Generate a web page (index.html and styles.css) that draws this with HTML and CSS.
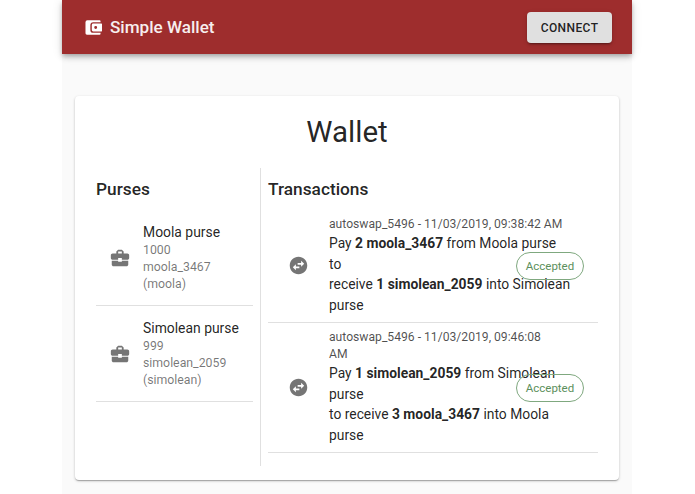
FILE: index.html
```html
<!DOCTYPE html>
<html lang="en">
<head>
<meta charset="utf-8">
<title>Simple Wallet</title>
<link rel="stylesheet" href="styles.css">
</head>
<body>
<div class="app">
  <header class="bar">
    <div class="brand">
      <svg class="brand-icon" viewBox="0.5 0.500 17.500 15" width="17" height="15"><path fill="#fff" fill-rule="evenodd" d="M3 0.500h12.500a1 1 0 0 1 1 1v1h-7.500a3 3 0 0 0-3 3v5a3 3 0 0 0 3 3h7.500v1a1 1 0 0 1-1 1h-13a1.500 1.500 0 0 1-1.500-1.500v-11.500a2 2 0 0 1 2-2z M9 4h8.500a.5.5 0 0 1 .5.5v7a.5.500 0 0 1-.5.5h-8.500a1.500 1.500 0 0 1-1.500-1.500v-5a1.500 1.500 0 0 1 1.500-1.500z M11.500 6.500a1.500 1.500 0 1 0 0 3a1.500 1.500 0 0 0 0-3z"/></svg>
      <span class="brand-name">Simple Wallet</span>
    </div>
    <button class="connect">CONNECT</button>
  </header>
  <main class="main">
    <section class="card">
      <h1 class="title">Wallet</h1>
      <div class="columns">
        <div class="purses">
          <h2 class="heading">Purses</h2>
          <ul class="list">
            <li class="purse">
              <svg class="case" viewBox="0 0 24 24"><path fill="#757575" d="M10 16v-1H3.010L3 19c0 1.110.89 2 2 2h14c1.110 0 2-.89 2-2v-4h-7v1h-4zm10-9h-4.010V5l-2-2h-4l-2 2v2H4c-1.100 0-2 .9-2 2v3c0 1.110.89 2 2 2h6v-2h4v2h6c1.100 0 2-.9 2-2V9c0-1.100-.9-2-2-2zm-6 0h-4V5h4v2z"/></svg>
              <div class="purse-text">
                <div class="purse-name">Moola purse</div>
                <div class="purse-sub">1000<br>moola_3467<br>(moola)</div>
              </div>
            </li>
            <li class="purse">
              <svg class="case" viewBox="0 0 24 24"><path fill="#757575" d="M10 16v-1H3.010L3 19c0 1.110.89 2 2 2h14c1.110 0 2-.89 2-2v-4h-7v1h-4zm10-9h-4.010V5l-2-2h-4l-2 2v2H4c-1.100 0-2 .9-2 2v3c0 1.110.89 2 2 2h6v-2h4v2h6c1.100 0 2-.9 2-2V9c0-1.100-.9-2-2-2zm-6 0h-4V5h4v2z"/></svg>
              <div class="purse-text">
                <div class="purse-name">Simolean purse</div>
                <div class="purse-sub">999<br>simolean_2059<br>(simolean)</div>
              </div>
            </li>
          </ul>
        </div>
        <div class="transactions">
          <h2 class="heading">Transactions</h2>
          <ul class="list">
            <li class="tx">
              <svg class="swap" viewBox="0 0 24 24"><path fill="#757575" d="M22 12c0-5.520-4.480-10-10-10S2 6.480 2 12s4.480 10 10 10 10-4.480 10-10zm-7-5.500l3.500 3.500-3.500 3.500V11h-4V9h4V6.500zm-6 11L5.500 14 9 10.500V13h4v2H9v2.500z"/></svg>
              <div class="tx-text">
                <div class="tx-meta">autoswap_5496 - 11/03/2019, 09:38:42 AM</div>
                <div class="tx-body">Pay <b>2 moola_3467</b> from Moola purse<br>to<br>receive <b>1 simolean_2059</b> into Simolean<br>purse</div>
              </div>
              <span class="chip chip-one">Accepted</span>
            </li>
            <li class="tx">
              <svg class="swap" viewBox="0 0 24 24"><path fill="#757575" d="M22 12c0-5.520-4.480-10-10-10S2 6.480 2 12s4.480 10 10 10 10-4.480 10-10zm-7-5.500l3.500 3.500-3.500 3.500V11h-4V9h4V6.500zm-6 11L5.500 14 9 10.500V13h4v2H9v2.500z"/></svg>
              <div class="tx-text">
                <div class="tx-meta">autoswap_5496 - 11/03/2019, 09:46:08<br>AM</div>
                <div class="tx-body">Pay <b>1 simolean_2059</b> from Simolean<br>purse<br>to receive <b>3 moola_3467</b> into Moola<br>purse</div>
              </div>
              <span class="chip chip-two">Accepted</span>
            </li>
          </ul>
        </div>
      </div>
    </section>
  </main>
</div>
</body>
</html>
```

FILE: styles.css
```css
* { box-sizing: border-box; }
html, body { margin: 0; height: 100%; background: #fff; }
body { font-family: Roboto, "Liberation Sans", sans-serif; color: rgba(0,0,0,.87); overflow: hidden; }
.app { width: 570px; height: 494px; margin-left: 62px; background: #fafafa; }
.bar { height: 54px; background: #9e2d2d; display: flex; align-items: center; justify-content: space-between; padding: 0 20px 0 23px; box-shadow: 0 2px 4px -1px rgba(0,0,0,.2), 0 4px 5px 0 rgba(0,0,0,.14), 0 1px 10px 0 rgba(0,0,0,.12); position: relative; }
.brand { display: flex; align-items: center; gap: 8px; }
.brand-icon { display: block; }
.brand-name { color: #fff; font-size: 17.100px; font-weight: 500; opacity: .92; }
.connect { width: 85px; height: 31px; border: 0; border-radius: 4px; background: #e0e0e0; color: rgba(0,0,0,.87); font: 500 12px Roboto, sans-serif; letter-spacing: .4px; box-shadow: 0 3px 1px -2px rgba(0,0,0,.2), 0 2px 2px 0 rgba(0,0,0,.14), 0 1px 5px 0 rgba(0,0,0,.12); padding: 1px 0 0; }
.main { padding: 42px 13px 0; }
.card { height: 384px; background: #fff; border-radius: 4px; box-shadow: 0 1px 3px 0 rgba(0,0,0,.2), 0 1px 1px 0 rgba(0,0,0,.14), 0 2px 1px -1px rgba(0,0,0,.12); padding: 16px 21px 14px; display: flex; flex-direction: column; }
.title { margin: 0 0 16px; font-size: 29.500px; font-weight: 400; line-height: 40px; text-align: center; }
.columns { display: flex; flex: 1; min-height: 0; }
.purses { width: 165px; padding-right: 7px; border-right: 1px solid #e0e0e0; }
.transactions { flex: 1; padding-left: 7px; }
.heading { margin: 0; padding-top: 10px; font-size: 17.300px; font-weight: 500; line-height: 22px; height: 42px; }
.list { margin: 0; padding: 0; list-style: none; }
.purse { display: flex; align-items: center; padding: 1px 0 0 13px; height: 96px; border-bottom: 1px solid #e0e0e0; }
.case { flex: none; width: 22px; height: 22px; margin-right: 12px; }
.purse-name { font-size: 13.900px; line-height: 19px; }
.purse-sub { font-size: 12.300px; line-height: 17px; color: rgba(0,0,0,.54); }
.tx { position: relative; display: flex; align-items: center; padding: 6px 0 7px 19.500px; border-bottom: 1px solid #e0e0e0; }
.swap { flex: none; width: 21px; height: 21px; margin-right: 20.500px; }
.tx-text { flex: 1; min-width: 0; }
.tx-meta { font-size: 12.150px; line-height: 17px; color: rgba(0,0,0,.7); }
.tx-body { font-size: 13.850px; line-height: 20.500px; }
.tx-body b { font-weight: 700; }
.chip { position: absolute; right: 14px; width: 68px; height: 27.500px; border: 1px solid #7fa87f; border-radius: 14px; font-size: 11.500px; line-height: 26px; text-align: center; color: #5c8f5c; }
.chip-one { top: 42px; }
.chip-two { top: 51px; }
```
